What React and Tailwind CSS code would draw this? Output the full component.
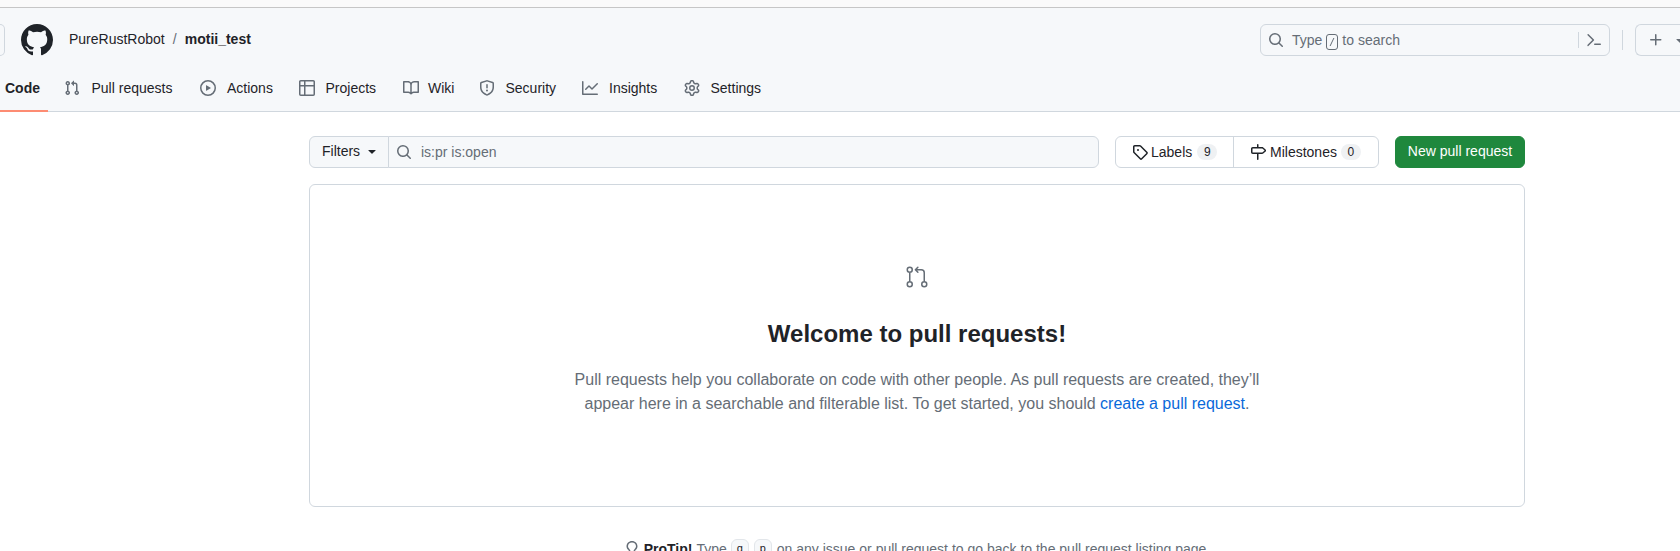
const paths = {
  github:
    'M8 0c4.42 0 8 3.58 8 8a8.013 8.013 0 0 1-5.45 7.59c-.4.08-.55-.17-.55-.38 0-.27.01-1.13.01-2.2 0-.75-.25-1.23-.54-1.48 1.78-.2 3.65-.88 3.65-3.95 0-.88-.31-1.59-.82-2.15.08-.2.36-1.02-.08-2.12 0 0-.67-.22-2.2.82-.64-.18-1.32-.27-2-.27-.68 0-1.36.09-2 .27-1.53-1.03-2.2-.82-2.2-.82-.44 1.1-.16 1.92-.08 2.12-.51.56-.82 1.28-.82 2.15 0 3.06 1.86 3.75 3.64 3.95-.23.2-.44.55-.51 1.07-.46.21-1.61.55-2.33-.66-.15-.24-.6-.83-1.23-.82-.67.01-.27.38.01.53.34.19.73.9.82 1.13.16.45.68 1.31 2.69.94 0 .67.01 1.3.01 1.49 0 .21-.15.45-.55.38A7.995 7.995 0 0 1 0 8c0-4.42 3.58-8 8-8Z',
  pull:
    'M1.5 3.25a2.25 2.25 0 1 1 3 2.122v5.256a2.251 2.251 0 1 1-1.5 0V5.372A2.25 2.25 0 0 1 1.5 3.25Zm5.677-.177L9.573.677A.25.25 0 0 1 10 .854V2.5h1A2.5 2.5 0 0 1 13.5 5v5.628a2.251 2.251 0 1 1-1.5 0V5a1 1 0 0 0-1-1h-1v1.646a.25.25 0 0 1-.427.177L7.177 3.427a.25.25 0 0 1 0-.354ZM3.75 2.5a.75.75 0 1 0 0 1.5.75.75 0 0 0 0-1.5Zm0 9.5a.75.75 0 1 0 0 1.5.75.75 0 0 0 0-1.5Zm8.25.75a.75.75 0 1 0 1.5 0 .75.75 0 0 0-1.5 0Z',
  play:
    'M8 0a8 8 0 1 1 0 16A8 8 0 0 1 8 0ZM1.5 8a6.5 6.5 0 1 0 13 0 6.5 6.5 0 0 0-13 0Zm4.879-2.773 4.264 2.559a.25.25 0 0 1 0 .428l-4.264 2.559A.25.25 0 0 1 6 10.559V5.442a.25.25 0 0 1 .379-.215Z',
  table:
    'M0 1.75C0 .784.784 0 1.75 0h12.5C15.216 0 16 .784 16 1.75v12.5A1.75 1.75 0 0 1 14.25 16H1.75A1.75 1.75 0 0 1 0 14.25ZM6.5 6.5v8h7.75a.25.25 0 0 0 .25-.25V6.5Zm8-1.5V1.75a.25.25 0 0 0-.25-.25H6.5V5Zm-13 1.5v7.75c0 .138.112.25.25.25H5v-8ZM5 5V1.5H1.75a.25.25 0 0 0-.25.25V5Z',
  book:
    'M0 1.75A.75.75 0 0 1 .75 1h4.253c1.227 0 2.317.59 3 1.501A3.743 3.743 0 0 1 11.006 1h4.245a.75.75 0 0 1 .75.75v10.5a.75.75 0 0 1-.75.75h-4.507a2.25 2.25 0 0 0-1.591.659l-.622.621a.75.75 0 0 1-1.06 0l-.622-.621A2.25 2.25 0 0 0 5.258 13H.75a.75.75 0 0 1-.75-.75Zm7.251 10.324.004-5.073-.002-2.253A2.25 2.25 0 0 0 5.003 2.5H1.5v9h3.757a3.75 3.75 0 0 1 1.994.574ZM8.755 4.75l-.004 7.322a3.752 3.752 0 0 1 1.992-.572H14.5v-9h-3.495a2.25 2.25 0 0 0-2.25 2.25Z',
  shield:
    'M7.467.133a1.748 1.748 0 0 1 1.066 0l5.25 1.68A1.75 1.75 0 0 1 15 3.48V7c0 1.566-.32 3.182-1.303 4.682-.983 1.498-2.585 2.813-5.032 3.855a1.697 1.697 0 0 1-1.33 0c-2.447-1.042-4.049-2.357-5.032-3.855C1.32 10.182 1 8.566 1 7V3.48a1.75 1.75 0 0 1 1.217-1.667Zm.61 1.429a.25.25 0 0 0-.153 0l-5.25 1.68a.25.25 0 0 0-.174.238V7c0 1.358.275 2.666 1.057 3.86.784 1.194 2.121 2.34 4.366 3.297a.196.196 0 0 0 .154 0c2.245-.956 3.582-2.104 4.366-3.298C13.225 9.666 13.5 8.36 13.5 7V3.48a.251.251 0 0 0-.174-.237l-5.25-1.68ZM8.75 4.75v3a.75.75 0 0 1-1.5 0v-3a.75.75 0 0 1 1.5 0ZM9 10.5a1 1 0 1 1-2 0 1 1 0 0 1 2 0Z',
  graph:
    'M1.5 1.75V13.5h13.75a.75.75 0 0 1 0 1.5H.75a.75.75 0 0 1-.75-.75V1.75a.75.75 0 0 1 1.5 0Zm14.28 2.53-5.25 5.25a.75.75 0 0 1-1.06 0L7 7.06 4.28 9.78a.751.751 0 0 1-1.042-.018.751.751 0 0 1-.018-1.042l3.25-3.25a.75.75 0 0 1 1.06 0L10 7.94l4.72-4.72a.751.751 0 0 1 1.042.018.751.751 0 0 1 .018 1.042Z',
  gear:
    'M8 0a8.2 8.2 0 0 1 .701.031C9.444.095 9.99.645 10.16 1.29l.288 1.107c.018.066.079.158.212.224.231.114.454.243.668.386.123.082.233.09.299.071l1.103-.303c.644-.176 1.392.021 1.82.63.27.385.506.792.704 1.218.315.675.111 1.422-.364 1.891l-.814.806c-.049.048-.098.147-.088.294.016.257.016.515 0 .772-.01.147.038.246.088.294l.814.806c.475.469.679 1.216.364 1.891a7.977 7.977 0 0 1-.704 1.217c-.428.61-1.176.807-1.82.63l-1.102-.302c-.067-.019-.177-.011-.3.071a5.909 5.909 0 0 1-.668.386c-.133.066-.194.158-.211.224l-.29 1.106c-.168.646-.715 1.196-1.458 1.26a8.006 8.006 0 0 1-1.402 0c-.743-.064-1.289-.614-1.458-1.26l-.289-1.106c-.018-.066-.079-.158-.212-.224a5.738 5.738 0 0 1-.668-.386c-.123-.082-.233-.09-.299-.071l-1.103.303c-.644.176-1.392-.021-1.82-.63a8.12 8.12 0 0 1-.704-1.218c-.315-.675-.111-1.422.363-1.891l.815-.806c.05-.048.098-.147.088-.294a6.214 6.214 0 0 1 0-.772c.01-.147-.038-.246-.088-.294l-.815-.806C.635 6.045.431 5.298.746 4.623a7.92 7.92 0 0 1 .704-1.217c.428-.61 1.176-.807 1.82-.63l1.102.302c.067.019.177.011.3-.071.214-.143.437-.272.668-.386.133-.066.194-.158.211-.224l.29-1.106C6.009.645 6.556.095 7.299.03 7.53.01 7.764 0 8 0Zm-.571 1.525c-.036.003-.108.036-.137.146l-.289 1.105c-.147.561-.549.967-.998 1.189-.173.086-.34.183-.5.29-.417.278-.97.423-1.529.27l-1.103-.303c-.109-.03-.175.016-.195.045-.22.312-.412.644-.573.99-.014.031-.021.11.059.19l.815.806c.411.406.562.957.53 1.456a4.709 4.709 0 0 0 0 .582c.032.499-.119 1.05-.53 1.456l-.815.806c-.081.08-.073.159-.059.19.162.346.353.677.573.989.02.03.085.076.195.046l1.102-.303c.56-.153 1.113-.008 1.53.27.161.107.328.204.501.29.447.222.85.629.997 1.189l.289 1.105c.029.109.101.143.137.146a6.6 6.6 0 0 0 1.142 0c.036-.003.108-.036.137-.146l.289-1.105c.147-.561.549-.967.998-1.189.173-.086.34-.183.5-.29.417-.278.97-.423 1.529-.27l1.103.303c.109.029.175-.016.195-.045.22-.313.411-.644.573-.99.014-.031.021-.11-.059-.19l-.815-.806c-.411-.406-.562-.957-.53-1.456a4.709 4.709 0 0 0 0-.582c-.032-.499.119-1.05.53-1.456l.815-.806c.081-.08.073-.159.059-.19a6.464 6.464 0 0 0-.573-.989c-.02-.03-.085-.076-.195-.046l-1.102.303c-.56.153-1.113.008-1.53-.27a4.44 4.44 0 0 0-.501-.29c-.447-.222-.85-.629-.997-1.189l-.289-1.105c-.029-.11-.101-.143-.137-.146a6.6 6.6 0 0 0-1.142 0ZM11 8a3 3 0 1 1-6 0 3 3 0 0 1 6 0ZM9.5 8a1.5 1.5 0 1 0-3.001.001A1.5 1.5 0 0 0 9.5 8Z',
  search:
    'M10.68 11.74a6 6 0 0 1-7.922-8.982 6 6 0 0 1 8.982 7.922l3.04 3.04a.749.749 0 0 1-.326 1.275.749.749 0 0 1-.734-.215ZM11.5 7a4.499 4.499 0 1 0-8.997 0A4.499 4.499 0 0 0 11.5 7Z',
  tag:
    'M1 7.775V2.75C1 1.784 1.784 1 2.75 1h5.025c.464 0 .91.184 1.238.513l6.25 6.25a1.75 1.75 0 0 1 0 2.474l-5.026 5.026a1.75 1.75 0 0 1-2.474 0l-6.25-6.25A1.752 1.752 0 0 1 1 7.775Zm1.5 0c0 .066.026.13.073.177l6.25 6.25a.25.25 0 0 0 .354 0l5.025-5.025a.25.25 0 0 0 0-.354l-6.25-6.25a.25.25 0 0 0-.177-.073H2.75a.25.25 0 0 0-.25.25ZM6 5a1 1 0 1 1 0 2 1 1 0 0 1 0-2Z',
  milestone:
    'M7.75 0a.75.75 0 0 1 .75.75V3h3.634c.414 0 .814.147 1.13.414l2.07 1.75a1.75 1.75 0 0 1 0 2.672l-2.07 1.75a1.75 1.75 0 0 1-1.13.414H8.5v5.25a.75.75 0 0 1-1.5 0V10H2.75A1.75 1.75 0 0 1 1 8.25v-3.5C1 3.784 1.784 3 2.75 3H7V.75A.75.75 0 0 1 7.75 0Zm4.384 8.5a.25.25 0 0 0 .161-.06l2.07-1.75a.248.248 0 0 0 0-.38l-2.07-1.75a.25.25 0 0 0-.161-.06H2.75a.25.25 0 0 0-.25.25v3.5c0 .138.112.25.25.25h9.384Z',
  bulb:
    'M8 1.5c-2.363 0-4 1.69-4 3.75 0 .984.424 1.625.984 2.304l.214.253c.223.264.47.556.673.848.284.411.537.896.621 1.49a.75.75 0 0 1-1.484.211c-.04-.282-.163-.547-.37-.847a8.456 8.456 0 0 0-.542-.68c-.084-.1-.173-.205-.268-.32C3.201 7.75 2.5 6.766 2.5 5.25 2.5 2.31 4.863 0 8 0s5.5 2.31 5.5 5.25c0 1.516-.701 2.5-1.328 3.259-.095.115-.184.22-.268.319-.207.245-.383.453-.541.681-.208.3-.33.565-.37.847a.751.751 0 0 1-1.485-.212c.084-.593.337-1.078.621-1.489.203-.292.45-.584.673-.848.075-.088.147-.173.213-.253.561-.679.985-1.32.985-2.304 0-2.06-1.637-3.75-4-3.75ZM5.75 12h4.5a.75.75 0 0 1 0 1.5h-4.5a.75.75 0 0 1 0-1.5ZM6 15.25a.75.75 0 0 1 .75-.75h2.5a.75.75 0 0 1 0 1.5h-2.5a.75.75 0 0 1-.75-.75Z',
  plus:
    'M7.75 2a.75.75 0 0 1 .75.75V7h4.25a.75.75 0 0 1 0 1.5H8.5v4.25a.75.75 0 0 1-1.5 0V8.5H2.75a.75.75 0 0 1 0-1.5H7V2.75A.75.75 0 0 1 7.75 2Z',
  palette:
    'm6.354 8.04-4.773 4.773a.75.75 0 1 0 1.061 1.06L7.945 8.57a.75.75 0 0 0 0-1.06L2.642 2.206a.75.75 0 0 0-1.06 1.061L6.353 8.04ZM8.75 11.5a.75.75 0 0 0 0 1.5h5.5a.75.75 0 0 0 0-1.5h-5.5Z',
  triangle:
    'm4.427 7.427 3.396 3.396a.25.25 0 0 0 .354 0l3.396-3.396A.25.25 0 0 0 11.396 7H4.604a.25.25 0 0 0-.177.427Z',
  pullLarge:
    'M16 19.25a3.25 3.25 0 1 1 6.5 0 3.25 3.25 0 0 1-6.5 0Zm-14.5 0a3.25 3.25 0 1 1 6.5 0 3.25 3.25 0 0 1-6.5 0Zm0-14.5a3.25 3.25 0 1 1 6.5 0 3.25 3.25 0 0 1-6.5 0ZM4.75 3a1.75 1.75 0 1 0 .001 3.501A1.75 1.75 0 0 0 4.75 3Zm0 14.5a1.75 1.75 0 1 0 .001 3.501A1.75 1.75 0 0 0 4.75 17.5Zm14.5 0a1.75 1.75 0 1 0 .001 3.501 1.75 1.75 0 0 0-.001-3.501ZM4.75 7.25A.75.75 0 0 1 5.5 8v8A.75.75 0 0 1 4 16V8a.75.75 0 0 1 .75-.75Zm8.655-5.53a.75.75 0 0 1 0 1.06L12.185 4h4.065A3.75 3.75 0 0 1 20 7.75v8.75a.75.75 0 0 1-1.5 0V7.75a2.25 2.25 0 0 0-2.25-2.25h-4.064l1.22 1.22a.75.75 0 0 1-1.061 1.06l-2.5-2.5a.75.75 0 0 1 0-1.06l2.5-2.5a.75.75 0 0 1 1.06 0Z',
};

function Icon({ name, size = 16, box = 16, className = '' }) {
  return (
    <svg
      width={size}
      height={size}
      viewBox={`0 0 ${box} ${box}`}
      fill="currentColor"
      aria-hidden="true"
      className={`shrink-0 ${className}`}
    >
      <path d={paths[name]} />
    </svg>
  );
}

const tabs = [
  { icon: 'pull', label: 'Pull requests', width: 'w-[136px]', gap: 'gap-[11.5px]' },
  { icon: 'play', label: 'Actions', width: 'w-[99px]', gap: 'gap-[11px]' },
  { icon: 'table', label: 'Projects', width: 'w-[104px]', gap: 'gap-[10.5px]' },
  { icon: 'book', label: 'Wiki', width: 'w-[76px]', gap: 'gap-[9px]' },
  { icon: 'shield', label: 'Security', width: 'w-[103px]', gap: 'gap-[10.5px]' },
  { icon: 'graph', label: 'Insights', width: 'w-[102px]', gap: 'gap-[11px]' },
  { icon: 'gear', label: 'Settings', width: 'w-[102px]', gap: 'gap-[10.5px]' },
];

function Header() {
  return (
    <header className="flex h-26 flex-col border-b border-[#d0d7de] bg-[#f6f8fa]">
      <div className="flex h-16 shrink-0 items-center">
        <div className="h-8 w-[5px] shrink-0 rounded-r-md border border-l-0 border-[#d0d7de]" />
        <a href="#" aria-label="Homepage" className="ml-4 text-[#1f2328]">
          <Icon name="github" size={32} />
        </a>
        <nav className="ml-4 flex pb-px leading-[21px]">
          <a href="#">PureRustRobot</a>
          <span className="w-5 text-center text-[#656d76]">/</span>
          <a href="#" className="font-semibold">motii_test</a>
        </nav>
        <div className="ml-auto flex h-8 w-[350px] shrink-0 items-center rounded-md border border-[#d0d7de] px-[7px] text-[#656d76]">
          <Icon name="search" />
          <span className="ml-2 flex items-center">
            Type
            <svg width="12" height="16" viewBox="0 0 12 16" fill="none" stroke="currentColor" className="mx-1 mt-[3px]">
              <rect x=".5" y=".5" width="11" height="15" rx="2.5" />
              <path d="M7.9 4 4.1 12" />
            </svg>
            to search
          </span>
          <span className="ml-auto flex h-4 items-center border-l border-[#d0d7de] pl-[7px]">
            <Icon name="palette" />
          </span>
        </div>
        <div className="ml-3 h-5 w-px shrink-0 bg-[#d0d7de]" />
        <div className="ml-3 flex h-8 w-[45px] shrink-0 items-center overflow-hidden rounded-l-md border border-r-0 border-[#d0d7de] pl-3 text-[#656d76]">
          <Icon name="plus" />
          <Icon name="triangle" className="ml-2" />
        </div>
      </div>
      <nav className="flex h-10 shrink-0">
        <a href="#" className="flex h-10 w-12 shrink-0 border-b-2 border-[#fd8c73] pl-[5px] font-semibold leading-8">
          Code
        </a>
        <div className="ml-4 flex h-8 items-center">
          {tabs.map((t) => (
            <a key={t.label} href="#" className={`flex shrink-0 items-center ${t.width} ${t.gap}`}>
              <Icon name={t.icon} className="text-[#656d76]" />
              {t.label}
            </a>
          ))}
        </div>
      </nav>
    </header>
  );
}

function Counter({ children }) {
  return (
    <span className="h-4 w-5 rounded-full bg-[#eff1f3] text-center text-xs leading-4">
      {children}
    </span>
  );
}

function Toolbar() {
  return (
    <div className="flex h-8">
      <button className="flex w-20 items-center rounded-l-md border border-[#d0d7de] bg-[#f6f8fa] pb-0.5 pl-3">
        Filters
        <Icon name="triangle" className="ml-1" />
      </button>
      <div className="-ml-px flex w-[711px] items-center rounded-r-md border border-[#d0d7de] bg-[#f6f8fa] pl-[7px] text-[#656d76]">
        <Icon name="search" />
        <span className="ml-[9px]">is:pr is:open</span>
      </div>
      <div className="ml-4 flex w-[264px] rounded-md border border-[#d0d7de]">
        <a href="#" className="flex w-[118px] items-center border-r border-[#d0d7de] pl-4">
          <Icon name="tag" className="mr-[3px]" />
          <span className="mr-[5px]">Labels</span>
          <Counter>9</Counter>
        </a>
        <a href="#" className="flex items-center pl-4">
          <Icon name="milestone" className="mr-1" />
          <span className="mr-1">Milestones</span>
          <Counter>0</Counter>
        </a>
      </div>
      <button className="ml-4 w-[130px] rounded-md border border-[#1f883d] bg-[#1f883d] pb-0.5 text-center text-white">
        New pull request
      </button>
    </div>
  );
}

function Key({ children }) {
  return (
    <kbd className="mr-[5px] flex h-[21px] w-[18px] justify-center rounded-md border border-[#e2e6ea] bg-[#f6f8fa] font-['Liberation_Mono',monospace] text-[11px] leading-[18px] text-[#1f2328]">
      {children}
    </kbd>
  );
}

export default function App() {
  return (
    <div className="flex h-[551px] w-[1680px] flex-col overflow-hidden bg-white font-['Liberation_Sans',Arial,sans-serif] text-sm text-[#1f2328]">
      <div className="h-2 shrink-0 border-b border-[#c6c6c6] bg-[#fafafa]" />
      <Header />
      <main className="ml-[309px] mt-6 w-[1216px]">
        <Toolbar />
        <section className="mt-4 flex h-[323px] flex-col items-center rounded-md border border-[#d0d7de] pt-20 text-center">
          <Icon name="pullLarge" size={24} box={24} className="text-[#656d76]" />
          <h2 className="mt-[27px] text-2xl font-semibold leading-9">Welcome to pull requests!</h2>
          <p className="mt-4 w-[700px] text-base leading-6 text-[#656d76]">
            Pull requests help you collaborate on code with other people. As pull requests are created, they’ll
            <br />
            appear here in a searchable and filterable list. To get started, you should{' '}
            <a href="#" className="text-[#0969da]">create a pull request</a>.
          </p>
        </section>
        <footer className="mt-8 flex justify-center text-[#656d76]">
          <Icon name="bulb" className="mr-1 mt-0.5" />
          <strong className="mr-1 font-semibold text-[#1f2328]">ProTip!</strong>
          <span className="mr-1">Type</span>
          <Key>g</Key>
          <Key>p</Key>
          <span>on any issue or pull request to go back to the pull request listing page.</span>
        </footer>
      </main>
    </div>
  );
}
